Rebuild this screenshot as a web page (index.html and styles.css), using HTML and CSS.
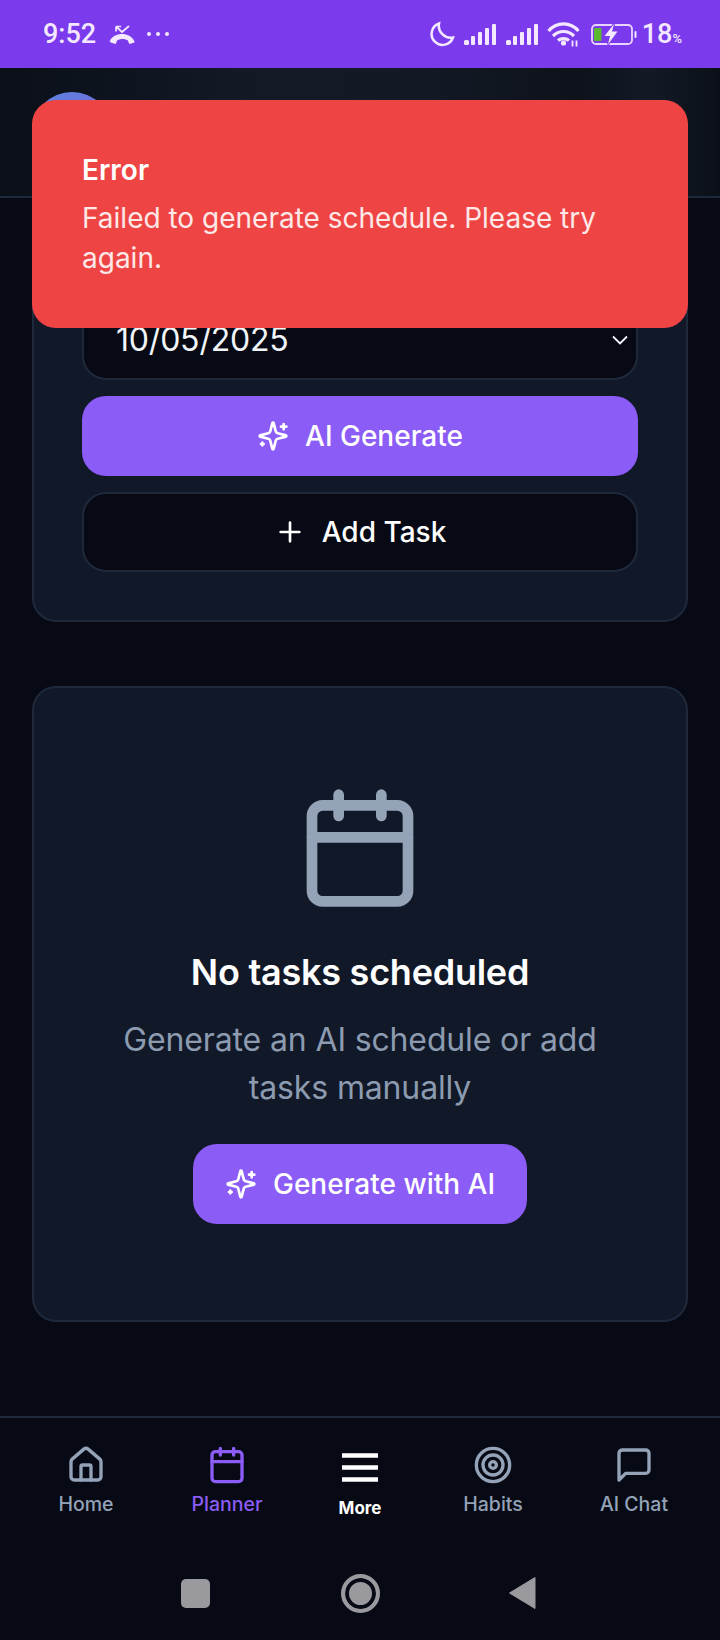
FILE: index.html
```html
<!DOCTYPE html>
<html lang="en">

<head>
    <meta charset="UTF-8">
    <meta name="viewport" content="width=device-width, initial-scale=1.0">
    <title>Planner</title>
    <link rel="stylesheet" href="styles.css">
</head>

<body>
    <div id="app">
        <div class="status-bar">
            <div class="status-left">
                <span class="status-time">9:52</span>
                <svg class="phone-icon" viewBox="0 0 26 20"><path d="M.5 17.500C3 12 8 10 13 10s10 2 12.500 7.500c.2.600-.1 1-.7 1.300l-3.500 1c-.6.2-1.200 0-1.400-.5l-1-2.800c-1.500-1-3.500-1.500-5.400-1.500s-3.900.5-5.400 1.500l-1 2.800c-.2.500-.8.700-1.400.5l-3.500-1c-.6-.3-.9-.7-.7-1.300z"/><path d="M20 2 13 8 7 2.500M7 2.500v5M7 2.500h5" class="phone-arrow"/></svg>
                <span class="status-dots"><i></i><i></i><i></i></span>
            </div>
            <div class="status-right">
                <svg class="moon-icon" viewBox="0 0 26 26"><path d="M10 2.500A11 11 0 1 0 24 16.500 12 12 0 0 1 10 2.500z"/></svg>
                <svg class="signal-icon" viewBox="0 0 33 21"><rect x="0" y="16" width="5" height="5" rx="1.500"/><rect x="7" y="12" width="4" height="9" rx="1"/><rect x="14" y="8" width="4" height="13" rx="1"/><rect x="21" y="4" width="4" height="17" rx="1"/><rect x="28" y="0" width="4" height="21" rx="1"/></svg>
                <svg class="signal-icon signal-last" viewBox="0 0 33 21"><rect x="0" y="16" width="5" height="5" rx="1.500"/><rect x="7" y="12" width="4" height="9" rx="1"/><rect x="14" y="8" width="4" height="13" rx="1"/><rect x="21" y="4" width="4" height="17" rx="1"/><rect x="28" y="0" width="4" height="21" rx="1"/></svg>
                <svg class="wifi-icon" viewBox="0 0 33 25"><path class="wifi-arc" d="M1.500 9C9.500-.5 23.500-.5 31.500 9M6 14c6-6 15-6 21 0M11 18.500c3-2.500 8-2.500 11 0"/><circle cx="16.500" cy="21" r="2.600" class="wifi-dot"/><path class="wifi-arc thin" d="M25.500 18.500v6M29.500 18.500v6"/></svg>
                <svg class="battery-icon" viewBox="0 0 46 23"><rect class="batt-frame" x="1" y="2" width="40" height="19" rx="4"/><rect class="batt-level" x="3" y="5" width="7.500" height="13" rx="1"/><path class="batt-bolt" d="M23 1 13.500 13H19l-2 8.500 9.500-13H21L23 1z"/><rect class="batt-cap" x="43.500" y="8" width="2" height="7" rx="1"/></svg>
                <span class="status-battery">18<small>%</small></span>
            </div>
        </div>

        <header class="top-header">
            <div class="avatar"></div>
        </header>

        <main class="content">
            <section class="card controls">
                <div class="date-select">
                    <span>10/05/2025</span>
                    <svg class="chevron" viewBox="0 0 24 24"><path d="m6 9 6 6 6-6"/></svg>
                </div>
                <button class="btn btn-primary">
                    <svg class="icon-sparkles" viewBox="0 0 24 24"><path d="M9.937 15.500A2 2 0 0 0 8.500 14.063l-6.135-1.582a.5.5 0 0 1 0-.962L8.500 9.936A2 2 0 0 0 9.937 8.500l1.582-6.135a.5.5 0 0 1 .963 0L14.063 8.500A2 2 0 0 0 15.500 9.937l6.135 1.581a.5.5 0 0 1 0 .964L15.500 14.063a2 2 0 0 0-1.437 1.437l-1.582 6.135a.5.5 0 0 1-.963 0z"/><path d="M20 3v4M22 5h-4M4 17v2M5 18H3"/></svg>
                    AI Generate
                </button>
                <button class="btn btn-dark">
                    <svg class="icon-sparkles" viewBox="0 0 24 24"><path d="M5 12h14M12 5v14"/></svg>
                    Add Task
                </button>
            </section>

            <section class="card empty">
                <svg class="empty-icon" viewBox="0 0 24 24"><rect x="3" y="4" width="18" height="18" rx="2"/><path d="M16 2v4M8 2v4M3 10h18"/></svg>
                <h2>No tasks scheduled</h2>
                <p>Generate an AI schedule or add tasks manually</p>
                <button class="btn btn-primary btn-inline">
                    <svg class="icon-sparkles" viewBox="0 0 24 24"><path d="M9.937 15.500A2 2 0 0 0 8.500 14.063l-6.135-1.582a.5.5 0 0 1 0-.962L8.500 9.936A2 2 0 0 0 9.937 8.500l1.582-6.135a.5.5 0 0 1 .963 0L14.063 8.500A2 2 0 0 0 15.500 9.937l6.135 1.581a.5.5 0 0 1 0 .964L15.500 14.063a2 2 0 0 0-1.437 1.437l-1.582 6.135a.5.5 0 0 1-.963 0z"/><path d="M20 3v4M22 5h-4M4 17v2M5 18H3"/></svg>
                    Generate with AI
                </button>
            </section>
        </main>

        <nav class="bottom-nav">
            <div class="tabs">
                <div class="tab">
                    <svg viewBox="0 0 24 24"><path d="M15 21v-8a1 1 0 0 0-1-1h-4a1 1 0 0 0-1 1v8"/><path d="M3 10a2 2 0 0 1 .709-1.528l7-5.999a2 2 0 0 1 2.582 0l7 5.999A2 2 0 0 1 21 10v9a2 2 0 0 1-2 2H5a2 2 0 0 1-2-2z"/></svg>
                    <span>Home</span>
                </div>
                <div class="tab active">
                    <svg viewBox="0 0 24 24"><rect x="3" y="4" width="18" height="18" rx="2"/><path d="M16 2v4M8 2v4M3 10h18"/></svg>
                    <span>Planner</span>
                </div>
                <div class="tab more">
                    <svg viewBox="0 0 40 40"><path d="M2 10.500h36M2 22.500h36M2 34.500h36"/></svg>
                    <span>More</span>
                </div>
                <div class="tab">
                    <svg viewBox="0 0 24 24"><circle cx="12" cy="12" r="10"/><circle cx="12" cy="12" r="6"/><circle cx="12" cy="12" r="2"/></svg>
                    <span>Habits</span>
                </div>
                <div class="tab">
                    <svg viewBox="0 0 24 24"><path d="M21 15a2 2 0 0 1-2 2H7l-4 4V5a2 2 0 0 1 2-2h14a2 2 0 0 1 2 2z"/></svg>
                    <span>AI Chat</span>
                </div>
            </div>
            <div class="system-bar">
                <div class="sys-square"></div>
                <div class="sys-circle"></div>
                <svg class="sys-back" viewBox="0 0 28 34"><path d="M27 1.500 1.500 17 27 32.500z"/></svg>
            </div>
        </nav>

        <div class="toast">
            <h3>Error</h3>
            <p>Failed to generate schedule. Please try again.</p>
        </div>
    </div>
</body>

</html>
```

FILE: styles.css
```css
* {
    box-sizing: border-box;
}

body {
    margin: 0;
    background: #070a14;
    font-family: Inter, "Noto Sans", sans-serif;
    color: #ffffff;
}

#app {
    position: relative;
    width: 720px;
    height: 1640px;
    display: flex;
    flex-direction: column;
    overflow: hidden;
}

/* status bar */
.status-bar {
    height: 68px;
    flex-shrink: 0;
    background: #7c3aed;
    color: #f3e8ff;
    display: flex;
    justify-content: space-between;
    align-items: center;
    padding: 0 38px 0 43px;
    font-family: Roboto, sans-serif;
}

.status-left,
.status-right {
    display: flex;
    align-items: center;
}

.status-time {
    font-size: 27px;
    font-weight: 500;
    margin-right: 13px;
}

.phone-icon {
    width: 26px;
    height: 20px;
    fill: #f3e8ff;
    margin-right: 12px;
}

.phone-arrow {
    fill: none;
    stroke: #f3e8ff;
    stroke-width: 1.700;
}

.status-dots {
    display: flex;
    gap: 5px;
}

.status-dots i {
    width: 4px;
    height: 4px;
    border-radius: 50%;
    background: #f3e8ff;
}

.moon-icon {
    width: 26px;
    height: 26px;
    fill: none;
    stroke: #f3e8ff;
    stroke-width: 2.500;
    margin-right: 9px;
}

.signal-icon {
    width: 33px;
    height: 21px;
    fill: #f3e8ff;
    margin-right: 9px;
}

.signal-last {
    margin-right: 8px;
}

.wifi-icon {
    width: 33px;
    height: 25px;
    margin-right: 11px;
}

.wifi-arc {
    fill: none;
    stroke: #f3e8ff;
    stroke-width: 3.200;
}

.wifi-arc.thin {
    stroke-width: 1.800;
}

.wifi-dot {
    fill: #f3e8ff;
}

.battery-icon {
    width: 46px;
    height: 23px;
    margin-right: 5px;
}

.batt-frame {
    fill: none;
    stroke: #e9d5ff;
    stroke-width: 1.800;
}

.batt-level {
    fill: #5cb82e;
}

.batt-bolt,
.batt-cap {
    fill: #f3e8ff;
}

.batt-bolt {
    stroke: #7c3aed;
    stroke-width: 2;
    paint-order: stroke;
}

.status-battery {
    font-size: 27px;
    font-weight: 500;
}

.status-battery small {
    font-size: 13px;
}

/* header */
.top-header {
    height: 130px;
    flex-shrink: 0;
    padding: 24px 32px;
    background: linear-gradient(90deg, #0a0f18, #131a26 35%, #131924 60%, #0d121b 80%, #131a26 90%, #0b1018);
    border-bottom: 2px solid #1e293b;
}

.avatar {
    width: 80px;
    height: 80px;
    border-radius: 50%;
    background: linear-gradient(135deg, #5b86dc, #7c5ce0);
}

/* main */
.content {
    flex: 1;
    padding: 51px 32px 0;
    display: flex;
    flex-direction: column;
    gap: 64px;
}

.card {
    background: #111827;
    border: 2px solid #1e293b;
    border-radius: 24px;
}

.controls {
    padding: 48px;
    display: flex;
    flex-direction: column;
    gap: 16px;
}

.date-select {
    height: 81px;
    padding: 0 2px 0 32px;
    display: flex;
    justify-content: space-between;
    align-items: center;
    background: #070a14;
    border: 2px solid #1e293b;
    border-radius: 24px;
    font-size: 32px;
    letter-spacing: -0.2px;
    color: #f1f5f9;
}

.chevron {
    width: 28px;
    height: 28px;
    fill: none;
    stroke: #f1f5f9;
    stroke-width: 1.600;
}

.btn {
    height: 80px;
    display: flex;
    justify-content: center;
    align-items: center;
    gap: 16px;
    border: none;
    border-radius: 24px;
    font-family: inherit;
    font-size: 28px;
    font-weight: 500;
    color: #ffffff;
}

.btn-primary {
    background: #8b5cf6;
}

.btn-dark {
    background: #070a14;
    border: 2px solid #1e293b;
}

.btn-inline {
    width: 334px;
}

.icon-sparkles {
    width: 32px;
    height: 32px;
    fill: none;
    stroke: #ffffff;
    stroke-width: 2;
    stroke-linecap: round;
    stroke-linejoin: round;
}

.empty {
    padding: 96px 48px;
    display: flex;
    flex-direction: column;
    align-items: center;
    text-align: center;
}

.empty-icon {
    width: 128px;
    height: 128px;
    fill: none;
    stroke: #94a3b8;
    stroke-width: 2;
    stroke-linecap: round;
    stroke-linejoin: round;
    margin-bottom: 40px;
}

.empty h2 {
    margin: 0 0 24px;
    font-size: 36px;
    line-height: 40px;
    font-weight: 600;
    letter-spacing: -0.25px;
}

.empty p {
    margin: 0 0 32px;
    font-size: 32px;
    line-height: 48px;
    letter-spacing: -0.14px;
    color: #8c9bb0;
}

/* bottom nav */
.bottom-nav {
    height: 224px;
    flex-shrink: 0;
    background: #070a14;
    border-top: 2px solid #1e293b;
}

.tabs {
    height: 142px;
    padding-top: 27px;
    display: grid;
    grid-template-columns: 172px 110px 156px 110px 172px;
}

.tab {
    display: flex;
    flex-direction: column;
    align-items: center;
    font-size: 19.500px;
    font-weight: 500;
    line-height: 28px;
    color: #94a3b8;
}

.tab svg {
    width: 40px;
    height: 40px;
    fill: none;
    stroke: currentColor;
    stroke-width: 2;
    stroke-linecap: round;
    stroke-linejoin: round;
    margin-bottom: 5px;
}

.tab.active {
    color: #8b5cf6;
}

.tab.more {
    color: #ffffff;
    font-size: 17px;
    font-weight: 700;
}

.tab.more svg {
    stroke-width: 4.400;
    stroke-linecap: butt;
    margin-bottom: 9px;
}

/* android buttons */
.system-bar {
    height: 66px;
    padding-left: 181px;
    display: flex;
    align-items: center;
}

.sys-square {
    width: 29px;
    height: 29px;
    border-radius: 5px;
    background: #9a9a9e;
    margin-right: 131px;
}

.sys-circle {
    width: 39px;
    height: 39px;
    border-radius: 50%;
    border: 4px solid #9a9a9e;
    background: #9a9a9e;
    box-shadow: inset 0 0 0 4px #070a14;
    margin-right: 128px;
}

.sys-back {
    width: 28px;
    height: 34px;
    fill: #9a9a9e;
    stroke: #9a9a9e;
    stroke-width: 1;
    stroke-linejoin: round;
}

/* toast sits over the page */
.toast {
    position: absolute;
    left: 32px;
    right: 32px;
    top: 100px;
    height: 228px;
    padding: 52px 50px;
    background: #ef4444;
    border-radius: 24px;
}

.toast h3 {
    margin: 0 0 10px;
    font-size: 28px;
    line-height: 36px;
    font-weight: 600;
}

.toast p {
    margin: 0;
    font-size: 28px;
    line-height: 40px;
    color: #fde8e8;
}
```
